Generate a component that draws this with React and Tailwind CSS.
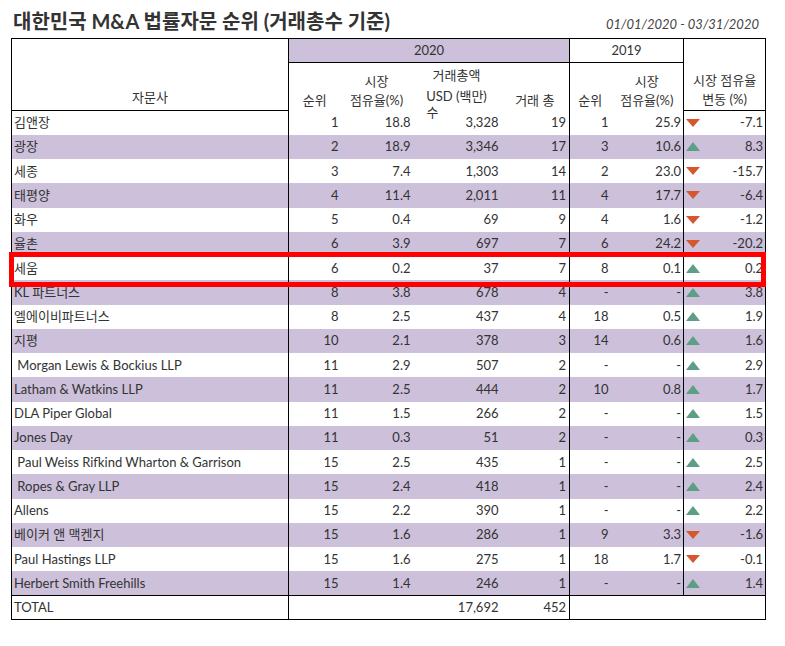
import React from 'react';

const rows = [
  ['김앤장', '1', '18.8', '3,328', '19', '1', '25.9', 'down', '-7.1'],
  ['광장', '2', '18.9', '3,346', '17', '3', '10.6', 'up', '8.3'],
  ['세종', '3', '7.4', '1,303', '14', '2', '23.0', 'down', '-15.7'],
  ['태평양', '4', '11.4', '2,011', '11', '4', '17.7', 'down', '-6.4'],
  ['화우', '5', '0.4', '69', '9', '4', '1.6', 'down', '-1.2'],
  ['율촌', '6', '3.9', '697', '7', '6', '24.2', 'down', '-20.2'],
  ['세움', '6', '0.2', '37', '7', '8', '0.1', 'up', '0.2'],
  ['KL 파트너스', '8', '3.8', '678', '4', '-', '-', 'up', '3.8'],
  ['엘에이비파트너스', '8', '2.5', '437', '4', '18', '0.5', 'up', '1.9'],
  ['지평', '10', '2.1', '378', '3', '14', '0.6', 'up', '1.6'],
  [' Morgan Lewis & Bockius LLP', '11', '2.9', '507', '2', '-', '-', 'up', '2.9'],
  ['Latham & Watkins LLP', '11', '2.5', '444', '2', '10', '0.8', 'up', '1.7'],
  ['DLA Piper Global', '11', '1.5', '266', '2', '-', '-', 'up', '1.5'],
  ['Jones Day', '11', '0.3', '51', '2', '-', '-', 'up', '0.3'],
  [' Paul Weiss Rifkind Wharton & Garrison', '15', '2.5', '435', '1', '-', '-', 'up', '2.5'],
  [' Ropes & Gray LLP', '15', '2.4', '418', '1', '-', '-', 'up', '2.4'],
  ['Allens', '15', '2.2', '390', '1', '-', '-', 'up', '2.2'],
  ['베이커 앤 맥켄지', '15', '1.6', '286', '1', '9', '3.3', 'down', '-1.6'],
  ['Paul Hastings LLP', '15', '1.6', '275', '1', '18', '1.7', 'down', '-0.1'],
  ['Herbert Smith Freehills', '15', '1.4', '246', '1', '-', '-', 'up', '1.4'],
];

function Arrow({ dir }) {
  if (dir === 'down') {
    return (
      <svg width="14" height="8" viewBox="0 0 14 8" className="shrink-0">
        <polygon points="0,0 14,0 7,8" fill="#d6562e" />
      </svg>
    );
  }
  return (
    <svg width="14" height="9" viewBox="0 0 14 9" className="shrink-0">
      <polygon points="7,0 14,9 0,9" fill="#5e9e86" />
    </svg>
  );
}

export default function App() {
  return (
    <div
      className="w-[785px] h-[646px] bg-white text-[#333] text-[13px]"
      style={{ fontFamily: 'Lato, "Noto Sans CJK KR", sans-serif' }}
    >
      {/* 제목 */}
      <div className="ml-[11px] w-[753px] h-[38px] pt-[9px] flex items-baseline justify-between">
        <h1 className="pl-[2px] text-[20px] leading-[24px] font-bold text-[#333]">
          대한민국 M&amp;A 법률자문 순위 (거래총수 기준)
        </h1>
        <span className="pr-[5px] italic text-[13px] text-[#444]">01/01/2020 - 03/31/2020</span>
      </div>

      <div className="relative ml-[11px] w-[754px]">
        <table className="w-[754px] table-fixed border-collapse border border-black leading-[19px]">
          <colgroup>
            <col className="w-[277px]" />
            <col className="w-[52px]" />
            <col className="w-[72px]" />
            <col className="w-[88px]" />
            <col className="w-[69px]" />
            <col className="w-[41px]" />
            <col className="w-[73px]" />
            <col className="w-[82px]" />
          </colgroup>
          <thead className="font-normal">
            <tr className="h-[24px]">
              <th rowSpan={2} className="border-r border-b border-black align-bottom font-normal pb-[3px]">
                자문사
              </th>
              <th colSpan={4} className="bg-[#ccc0da] border-r border-b border-black font-normal">
                2020
              </th>
              <th colSpan={2} className="border-r border-b border-black font-normal">
                2019
              </th>
              <th rowSpan={2} className="border-b border-black align-bottom font-normal pb-[1px]">
                <div>시장 점유율</div>
                <div>변동 (%)</div>
              </th>
            </tr>
            <tr className="h-[48px]">
              <th className="align-bottom font-normal pb-[1px]">순위</th>
              <th className="align-bottom font-normal pb-[1px]">
                <div>시장</div>
                <div>점유율(%)</div>
              </th>
              <th className="relative align-top font-normal pt-[2px] leading-[21px]">
                <div>거래총액</div>
                <div>USD (백만)</div>
                <span className="absolute left-[14px] top-[43px] leading-[13px]">수</span>
              </th>
              <th className="border-r border-black align-bottom font-normal pb-[1px]">거래 총</th>
              <th className="align-bottom font-normal pb-[1px]">순위</th>
              <th className="border-r border-black align-bottom font-normal pb-[1px]">
                <div>시장</div>
                <div>점유율(%)</div>
              </th>
            </tr>
          </thead>
          <tbody>
            {rows.map((r, i) => (
              <tr key={i} className={`h-[24.25px] ${i % 2 === 1 ? 'bg-[#ccc0da]' : 'bg-white'}`}>
                <td className="border-r border-black pl-[2px] whitespace-pre">{r[0]}</td>
                <td className="text-right pr-[2px]">{r[1]}</td>
                <td className="text-right pr-[2px]">{r[2]}</td>
                <td className="text-right pr-[2px]">{r[3]}</td>
                <td className="border-r border-black text-right pr-[3px]">{r[4]}</td>
                <td className="text-right pr-[2px]">{r[5]}</td>
                <td className="border-r border-black text-right pr-[2px]">{r[6]}</td>
                <td className="pl-[2px] pr-[2px]">
                  <div className="flex items-center justify-between">
                    <Arrow dir={r[7]} />
                    <span>{r[8]}</span>
                  </div>
                </td>
              </tr>
            ))}
            <tr className="h-[24px] border-t border-black">
              <td className="border-r border-black pl-[2px]">TOTAL</td>
              <td />
              <td />
              <td className="text-right pr-[2px]">17,692</td>
              <td className="border-r border-black text-right pr-[3px]">452</td>
              <td colSpan={3} />
            </tr>
          </tbody>
        </table>

        {/* 강조 박스 */}
        <div className="absolute left-[-2px] top-[214px] w-[757px] h-[35px] border-[5px] border-[#ff0000] pointer-events-none" />
      </div>
    </div>
  );
}
